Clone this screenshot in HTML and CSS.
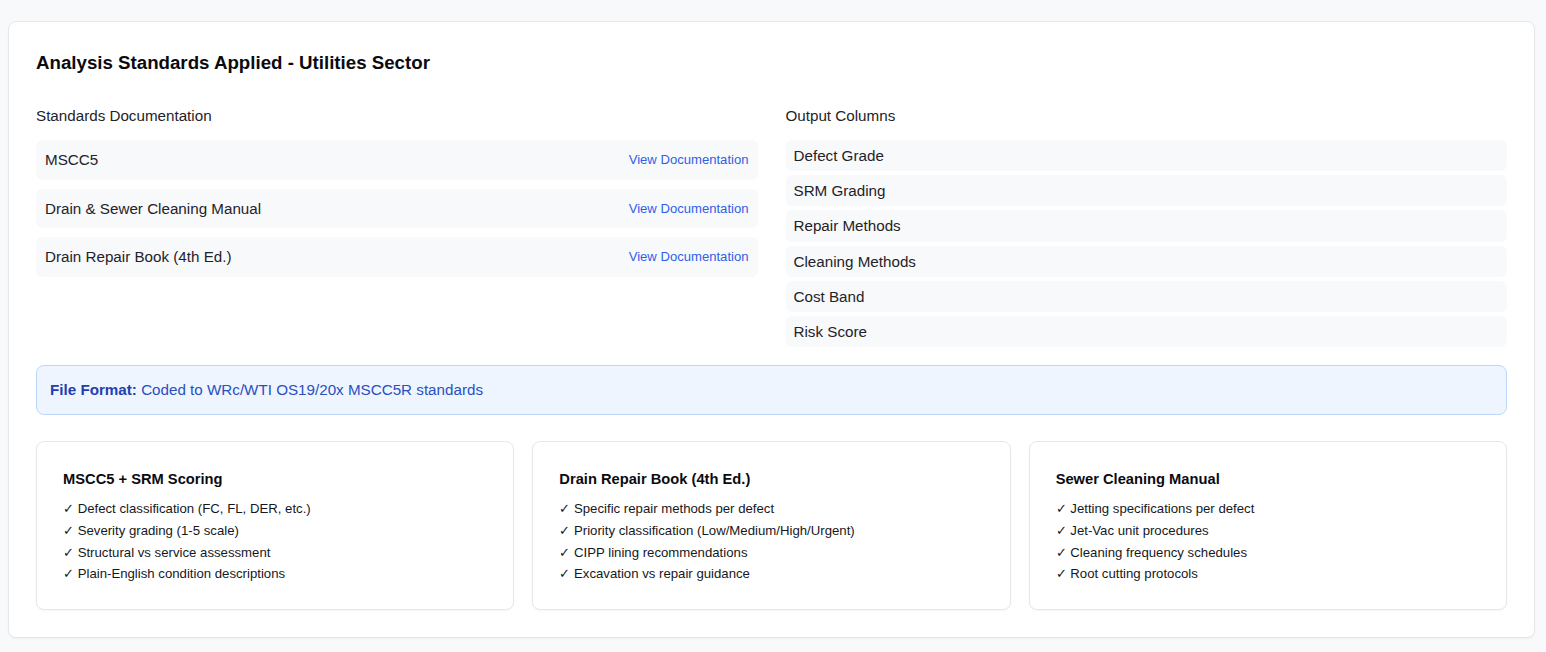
FILE: index.html
```html
<!DOCTYPE html>
<html lang="en">
<head>
<meta charset="utf-8">
<title>Analysis Standards Applied</title>
<link rel="stylesheet" href="styles.css">
</head>
<body>
<section class="panel">
  <h2 class="panel-title">Analysis Standards Applied - Utilities Sector</h2>
  <div class="columns">
    <div class="column">
      <div class="col-label">Standards Documentation</div>
      <div class="doc-list">
        <div class="doc-row"><span>MSCC5</span><a class="doc-link" href="#">View Documentation</a></div>
        <div class="doc-row"><span>Drain &amp; Sewer Cleaning Manual</span><a class="doc-link" href="#">View Documentation</a></div>
        <div class="doc-row"><span>Drain Repair Book (4th Ed.)</span><a class="doc-link" href="#">View Documentation</a></div>
      </div>
    </div>
    <div class="column">
      <div class="col-label">Output Columns</div>
      <div class="out-list">
        <div class="out-row">Defect Grade</div>
        <div class="out-row">SRM Grading</div>
        <div class="out-row">Repair Methods</div>
        <div class="out-row">Cleaning Methods</div>
        <div class="out-row">Cost Band</div>
        <div class="out-row">Risk Score</div>
      </div>
    </div>
  </div>
  <div class="format-box"><strong>File Format:</strong>&nbsp;Coded to WRc/WTI OS19/20x MSCC5R standards</div>
  <div class="std-cards">
    <div class="std-card">
      <h3>MSCC5 + SRM Scoring</h3>
      <ul>
        <li>✓ Defect classification (FC, FL, DER, etc.)</li>
        <li>✓ Severity grading (1-5 scale)</li>
        <li>✓ Structural vs service assessment</li>
        <li>✓ Plain-English condition descriptions</li>
      </ul>
    </div>
    <div class="std-card">
      <h3>Drain Repair Book (4th Ed.)</h3>
      <ul>
        <li>✓ Specific repair methods per defect</li>
        <li>✓ Priority classification (Low/Medium/High/Urgent)</li>
        <li>✓ CIPP lining recommendations</li>
        <li>✓ Excavation vs repair guidance</li>
      </ul>
    </div>
    <div class="std-card">
      <h3>Sewer Cleaning Manual</h3>
      <ul>
        <li>✓ Jetting specifications per defect</li>
        <li>✓ Jet-Vac unit procedures</li>
        <li>✓ Cleaning frequency schedules</li>
        <li>✓ Root cutting protocols</li>
      </ul>
    </div>
  </div>
</section>
</body>
</html>
```
FILE: styles.css
```css
* { box-sizing: border-box; }

body {
  margin: 0;
  padding: 21px 11px 14px 8px;
  background: #f8f9fb;
  font-family: "Liberation Sans", Arial, sans-serif;
  color: #111827;
}

.panel {
  background: #ffffff;
  border: 1px solid #e5e7eb;
  border-radius: 8px;
  padding: 27px;
  box-shadow: 0 1px 2px rgba(0, 0, 0, 0.04);
}

.panel-title {
  margin: 0;
  font-size: 18.7px;
  line-height: 28px;
  font-weight: 700;
  color: #0b0b0f;
}

.columns {
  display: grid;
  grid-template-columns: 1fr 1fr;
  gap: 28px;
  margin-top: 28px;
}

.col-label {
  font-size: 15.2px;
  line-height: 22px;
  margin-bottom: 13px;
  color: #1f2328;
}

.doc-list {
  display: flex;
  flex-direction: column;
  gap: 9px;
}

.doc-row {
  display: flex;
  align-items: center;
  justify-content: space-between;
  height: 39.5px;
  padding: 0 9px;
  background: #f8f9fb;
  border-radius: 6px;
  font-size: 15.2px;
  color: #1f2328;
}

.doc-link {
  font-size: 13.1px;
  color: #2f5fe8;
  text-decoration: none;
}

.out-list {
  display: flex;
  flex-direction: column;
  gap: 4px;
}

.out-row {
  display: flex;
  align-items: center;
  height: 31.2px;
  padding: 0 8px;
  background: #f8f9fb;
  border-radius: 6px;
  font-size: 15.2px;
  color: #1f2328;
}

.format-box {
  display: flex;
  align-items: center;
  height: 49.5px;
  margin-top: 18px;
  padding: 0 13px;
  background: #eef5ff;
  border: 1px solid #bcd7fb;
  border-radius: 8px;
  font-size: 15.2px;
  color: #2a4fbf;
}

.format-box strong {
  color: #1e40af;
}

.std-cards {
  display: grid;
  grid-template-columns: repeat(3, 1fr);
  gap: 18px;
  margin-top: 26.5px;
}

.std-card {
  background: #ffffff;
  border: 1px solid #e5e7eb;
  border-radius: 8px;
  padding: 27px 26px 24px;
  box-shadow: 0 1px 2px rgba(0, 0, 0, 0.04);
}

.std-card h3 {
  margin: 0 0 8px;
  font-size: 14.7px;
  line-height: 21px;
  font-weight: 700;
  color: #0b0b0f;
}

.std-card ul {
  list-style: none;
  margin: 0;
  padding: 0;
}

.std-card li {
  font-size: 13.2px;
  line-height: 21.7px;
  color: #16181d;
}
```
